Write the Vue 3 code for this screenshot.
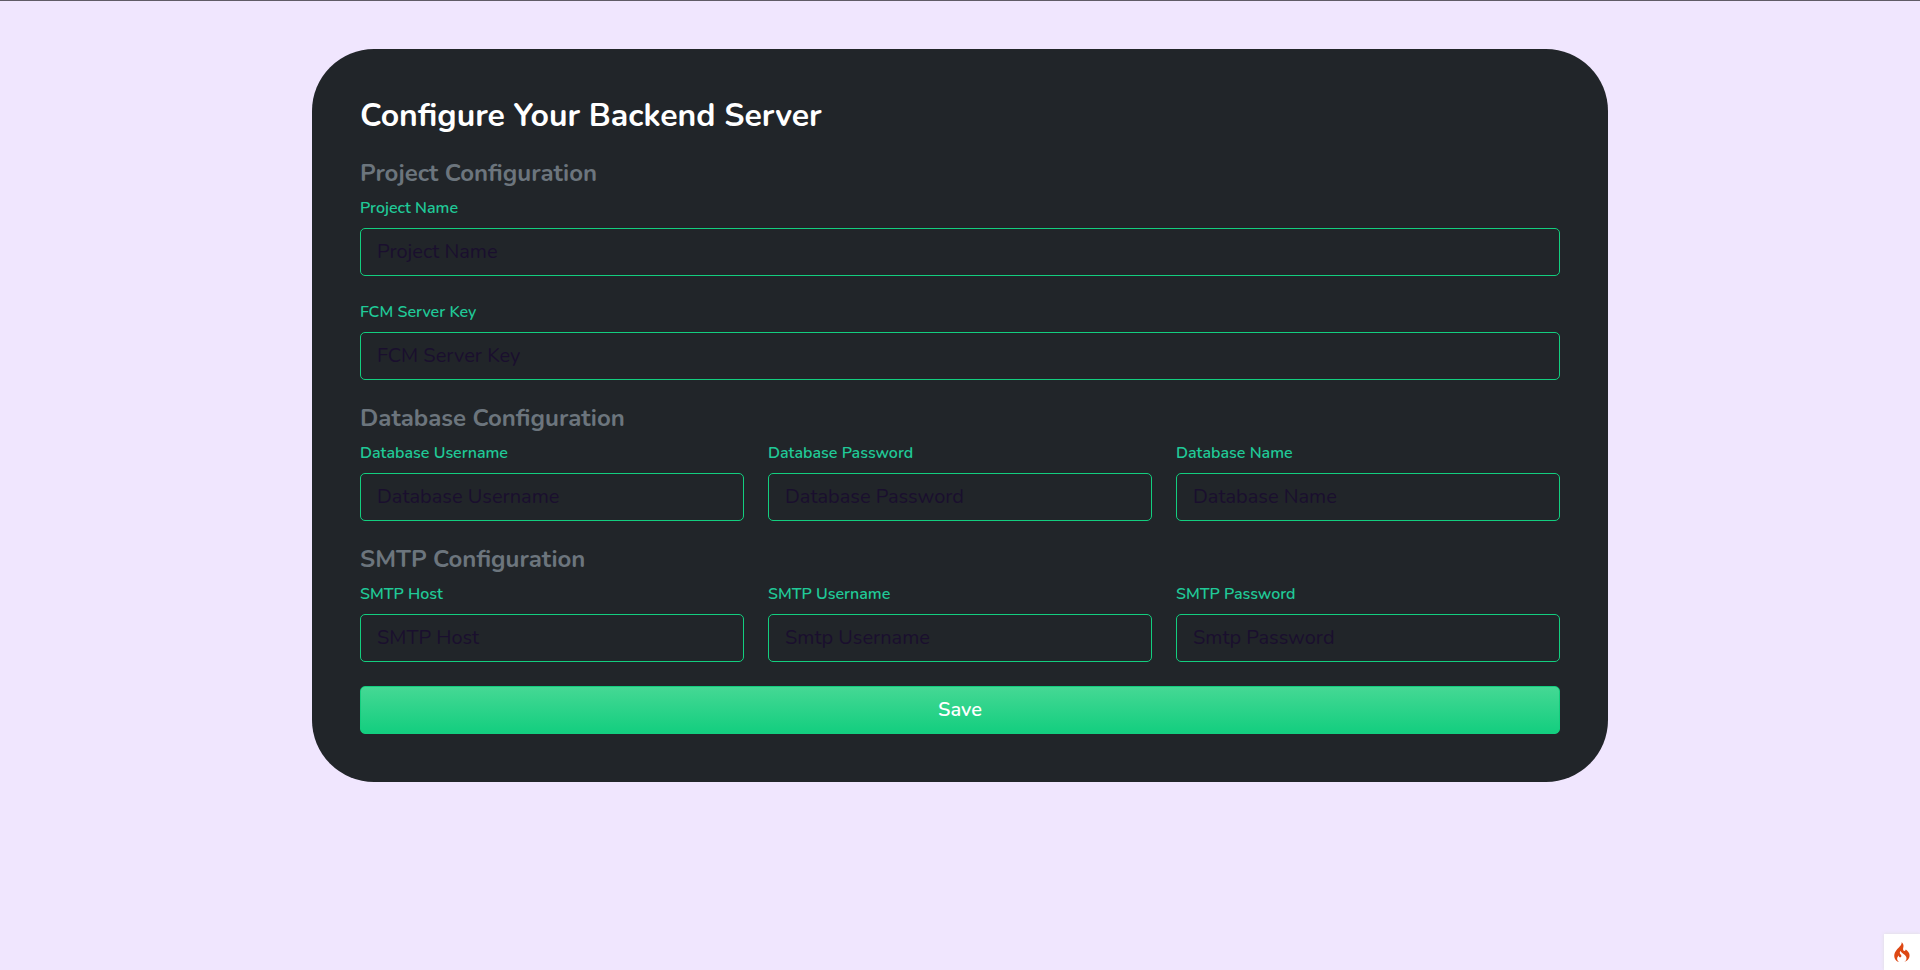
<script setup>
import { reactive } from 'vue'

const sections = [
  {
    title: 'Project Configuration',
    columns: false,
    fields: [
      { id: 'project-name', label: 'Project Name', placeholder: 'Project Name' },
      { id: 'fcm-key', label: 'FCM Server Key', placeholder: 'FCM Server Key' },
    ],
  },
  {
    title: 'Database Configuration',
    columns: true,
    fields: [
      { id: 'db-username', label: 'Database Username', placeholder: 'Database Username' },
      { id: 'db-password', label: 'Database Password', placeholder: 'Database Password' },
      { id: 'db-name', label: 'Database Name', placeholder: 'Database Name' },
    ],
  },
  {
    title: 'SMTP Configuration',
    columns: true,
    fields: [
      { id: 'smtp-host', label: 'SMTP Host', placeholder: 'SMTP Host' },
      { id: 'smtp-username', label: 'SMTP Username', placeholder: 'Smtp Username' },
      { id: 'smtp-password', label: 'SMTP Password', placeholder: 'Smtp Password' },
    ],
  },
]

const values = reactive({})
</script>

<template>
  <div class="page">
    <main class="card">
      <h1 class="title">Configure Your Backend Server</h1>
      <form class="form" @submit.prevent>
        <section v-for="section in sections" :key="section.title">
          <h2 class="section-title">{{ section.title }}</h2>
          <div class="fields" :class="{ columns: section.columns }">
            <div v-for="field in section.fields" :key="field.id" class="field">
              <label class="label" :for="field.id">{{ field.label }}</label>
              <input
                :id="field.id"
                v-model="values[field.id]"
                class="input"
                type="text"
                :placeholder="field.placeholder"
              />
            </div>
          </div>
        </section>
        <button class="save" type="submit">Save</button>
      </form>
    </main>
    <button class="debug" type="button" aria-label="Debug toolbar">
      <svg class="flame" viewBox="0 0 155 200" aria-hidden="true">
        <path
          fill="#dd4814"
          d="M73.7 3.7c2.2 7.9-.7 18.5-7.8 29-1.8 2.6-10.7 12.2-19.7 21.3-23.9 24-33.6 37.1-40.3 54.4-7.9 20.6-7.8 40.8.5 58.2C12.8 180 27.6 193 42.5 198l6 2-3-2.2c-21-15.2-22.9-38.7-4.8-58.8 2.5-2.7 4.8-5 5.1-5 .4 0 .7 2.7.7 6.1 0 5.7.2 6.2 3.7 9.5 3 2.7 4.6 3.4 7.8 3.4 5.6 0 9.9-2.4 11.6-6.5 2.9-6.9 1.6-12-5-20.5-10.5-13.4-11.7-23.3-4.3-34.7l3.1-4.8.7 4.7c1.3 8.2 5.8 12.9 25 25.8 20.9 14.1 30.6 26.1 32.8 40.5 1.1 7.2-.1 16.1-3.1 21.8-2.7 5.3-11.2 14.3-16.5 17.4-2.4 1.4-4.3 2.6-4.3 2.8 0 .2 2.4-.4 5.3-1.4 24.1-8.3 42.7-27.1 48.2-48.6 1.9-7.6 1.9-20.2-.1-28.5-3.5-15.2-14.6-30.5-29.9-41.2l-7-4.9-.6 3.3c-.8 4.8-2.6 7.6-5.9 9.3-4.5 2.3-10.3 1.9-13.8-1-6.7-5.7-7.8-14.6-3.7-30.5 3-11.6 3.2-20.6.5-29.1C88.3 18 80.6 6.3 74.8 2.2 73.1.9 73 1 73.7 3.7z"
        />
      </svg>
    </button>
  </div>
</template>

<style>
body {
  margin: 0;
  background: #f0e6fe;
}
</style>

<style scoped>
.page {
  box-sizing: border-box;
  min-height: 100vh;
  padding: 48px 24px;
  border-top: 1px solid #605c66;
  font-family: Nunito, Lato, "Open Sans", sans-serif;
}
.card {
  box-sizing: border-box;
  max-width: 1296px;
  margin: 0 auto;
  padding: 48px;
  border-radius: 62px;
  background: #212529;
}
.title {
  margin: 0 0 24px;
  color: #fff;
  font-size: 32px;
  font-weight: 700;
  line-height: 38px;
}
.form {
  display: flex;
  flex-direction: column;
  gap: 24px;
}
.section-title {
  margin: 0 0 8px;
  color: #6c757d;
  font-size: 24px;
  font-weight: 700;
  line-height: 29px;
}
.fields {
  display: grid;
  gap: 24px;
}
.fields.columns {
  grid-template-columns: repeat(3, minmax(0, 1fr));
}
.field {
  display: flex;
  flex-direction: column;
  gap: 8px;
}
.label {
  color: #20c997;
  font-size: 16px;
  font-weight: 600;
  line-height: 24px;
}
.input {
  box-sizing: border-box;
  width: 100%;
  height: 48px;
  padding: 7px 16px 9px;
  border: 1px solid #13ce7f;
  border-radius: 5px;
  background: transparent;
  color: #fff;
  font-family: inherit;
  font-size: 20px;
  line-height: 30px;
}
.input::placeholder {
  color: #1a0f2e;
  opacity: 1;
}
.save {
  height: 48px;
  padding: 8px 16px;
  border: 1px solid #13ce7f;
  border-radius: 5px;
  background: linear-gradient(180deg, #45d894, #13ce7f);
  color: #fff;
  font-family: inherit;
  font-size: 20px;
  font-weight: 600;
  line-height: 30px;
}
.debug {
  position: fixed;
  right: 0;
  bottom: 0;
  display: flex;
  align-items: center;
  justify-content: center;
  width: 36px;
  height: 36px;
  padding: 0;
  border: 0;
  background: #fff;
  box-shadow: 0 0 4px #dfdfdf;
}
.flame {
  width: 16px;
  height: 20px;
}
</style>
